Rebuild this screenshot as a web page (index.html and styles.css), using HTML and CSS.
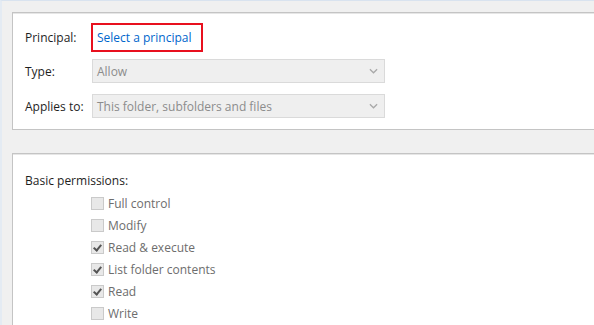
FILE: index.html
```html
<!DOCTYPE html>
<html lang="en">
<head>
  <meta charset="UTF-8">
  <title>Permission Entry</title>
  <link rel="stylesheet" href="styles.css">
</head>
<body>
  <div class="window">
    <!-- principal / type / applies to -->
    <div class="panel top-panel">
      <div class="field-row principal-row">
        <span class="label">Principal:</span>
        <span class="principal-box"><a class="link" href="#">Select a principal</a></span>
      </div>
      <div class="field-row">
        <span class="label">Type:</span>
        <div class="dropdown">
          <span>Allow</span>
          <svg class="chevron" viewBox="0 0 10 6"><path d="M1 1l4 4 4-4"/></svg>
        </div>
      </div>
      <div class="field-row">
        <span class="label">Applies to:</span>
        <div class="dropdown">
          <span>This folder, subfolders and files</span>
          <svg class="chevron" viewBox="0 0 10 6"><path d="M1 1l4 4 4-4"/></svg>
        </div>
      </div>
    </div>

    <!-- basic permissions -->
    <div class="panel perm-panel">
      <div class="perm-title">Basic permissions:</div>
      <ul class="perm-list">
        <li><span class="checkbox"></span>Full control</li>
        <li><span class="checkbox"></span>Modify</li>
        <li><span class="checkbox checked"></span>Read &amp; execute</li>
        <li><span class="checkbox checked"></span>List folder contents</li>
        <li><span class="checkbox checked"></span>Read</li>
        <li><span class="checkbox"></span>Write</li>
      </ul>
    </div>
  </div>
</body>
</html>
```

FILE: styles.css
```css
* { margin:0; padding:0; box-sizing:border-box; }
html, body { height:100%; }
body {
  background:#f0f0f0;
  font-family:"Open Sans", "Noto Sans", sans-serif;
  font-size:12px;
  color:#1e1e1e;
  overflow:hidden;
}
.window {
  height:100%;
  border-top:1px solid #d9e3ef;
  border-left:2px solid #e4ebf3;
  padding:11px 0 0 10px;
  display:flex; flex-direction:column;
}

.panel {
  background:#fff;
  border:1px solid #c4c4c4;
  border-right:none;
  box-shadow:inset 0 1px 0 #e6e6e6;
  margin-right:-20px;
}

/* top panel */
.top-panel {
  padding:10px 0 11px 12px;
  display:flex; flex-direction:column;
}
.field-row {
  display:flex; align-items:center;
  margin-top:11px;
}
.principal-row { margin-top:0; margin-bottom:-4px; }
.field-row .label { width:67px; }
.principal-box {
  display:flex; align-items:center;
  width:112px; height:29px;
  border:2px solid #e8101e;
  margin-left:-1px;
  padding-left:4px;
}
.link { color:#0066cc; text-decoration:none; }
.dropdown {
  width:293px; height:24px;
  background:#efefef;
  border:1px solid #dadada;
  display:flex; align-items:center; justify-content:space-between;
  padding:0 6px 0 4px;
  color:#8c8c8c;
}
.chevron {
  width:9px; height:6px;
  fill:none; stroke:#a8a8a8; stroke-width:1.4;
}

/* permissions panel */
.perm-panel {
  margin-top:23px;
  flex:1;
  border-bottom:none;
  padding:18px 0 0 12px;
  overflow:hidden;
}
.perm-title { line-height:17px; }
.perm-list {
  list-style:none;
  margin-top:3px;
  padding-left:66px;
  color:#6d6d6d;
}
.perm-list li {
  display:flex; align-items:center;
  height:22px;
}
.checkbox {
  width:13px; height:13px;
  border:1px solid #cacaca;
  background:#e8e8e8;
  margin-right:4px;
  position:relative;
}
.checkbox.checked::after {
  content:'';
  position:absolute; left:3px; top:1px;
  width:3px; height:6px;
  border:solid #555;
  border-width:0 2px 2px 0;
  transform:rotate(40deg);
}
```
